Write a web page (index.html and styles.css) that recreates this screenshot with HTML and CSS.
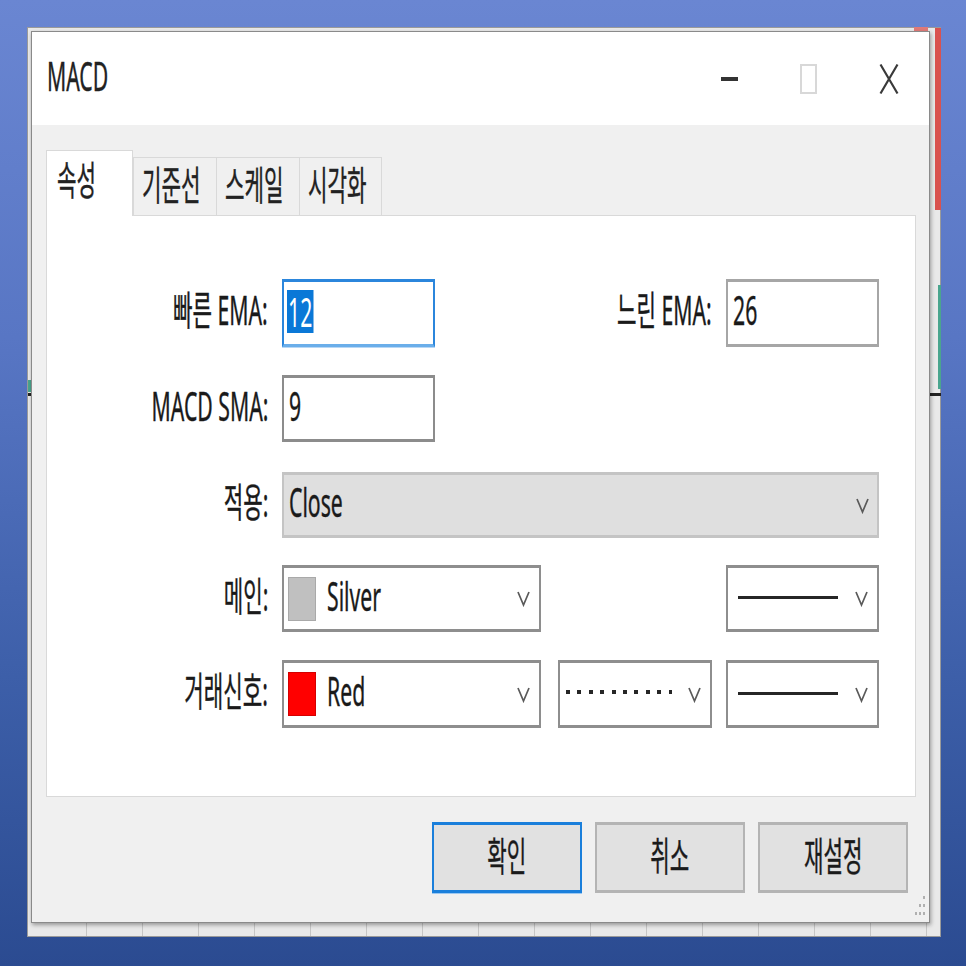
FILE: index.html
```html
<!DOCTYPE html>
<html lang="ko">
<head>
<meta charset="utf-8">
<title>MACD</title>
<link rel="stylesheet" href="styles.css">
</head>
<body>
<div class="frame">
  <div class="chart-red"></div>
  <div class="chart-red-top"></div>
  <div class="chart-green"></div>
  <div class="chart-tick"></div>
  <div class="chart-line chart-line-l"></div>
  <div class="chart-line chart-line-r"></div>
  <div class="chart-ticks"></div>
  <div class="dialog">
    <div class="titlebar">
      <span class="t title">MACD</span>
      <div class="controls">
        <span class="ctl-min"></span>
        <span class="ctl-max"></span>
        <svg class="ctl-close" viewBox="0 0 20 32" width="20" height="32"><path d="M1.5 1.5 L18.5 30.5 M18.5 1.5 L1.5 30.5" fill="none" stroke="#3a3a3a" stroke-width="2.2"/></svg>
      </div>
    </div>
    <div class="body">
      <div class="tabs">
        <div class="tab active"><span class="t">속성</span></div>
        <div class="tab"><span class="t">기준선</span></div>
        <div class="tab"><span class="t">스케일</span></div>
        <div class="tab last"><span class="t">시각화</span></div>
      </div>
      <div class="panel">
        <div class="form">
          <div class="lbl r1"><span class="t">빠른 EMA:</span></div>
          <div class="input focus r1 c3"><span class="t sel">12</span></div>
          <div class="lbl r1 c6"><span class="t">느린 EMA:</span></div>
          <div class="input r1 c8"><span class="t">26</span></div>

          <div class="lbl r2"><span class="t">MACD SMA:</span></div>
          <div class="input dark r2 c3"><span class="t">9</span></div>

          <div class="lbl r3"><span class="t">적용:</span></div>
          <div class="select disabled r3 wide"><span class="t">Close</span>
            <svg class="chev" viewBox="0 0 13 17" width="13" height="17"><polyline points="1,2 6.5,15 12,2" fill="none" stroke="#5a5a5a" stroke-width="1.7"/></svg>
          </div>

          <div class="lbl r4"><span class="t">메인:</span></div>
          <div class="select r4 c34"><span class="swatch silver"></span><span class="t">Silver</span>
            <svg class="chev" viewBox="0 0 13 17" width="13" height="17"><polyline points="1,2 6.5,15 12,2" fill="none" stroke="#5a5a5a" stroke-width="1.7"/></svg>
          </div>
          <div class="select line-sel r4 c8"><span class="solid"></span>
            <svg class="chev" viewBox="0 0 13 17" width="13" height="17"><polyline points="1,2 6.5,15 12,2" fill="none" stroke="#5a5a5a" stroke-width="1.7"/></svg>
          </div>

          <div class="lbl r5"><span class="t">거래신호:</span></div>
          <div class="select r5 c34"><span class="swatch red"></span><span class="t">Red</span>
            <svg class="chev" viewBox="0 0 13 17" width="13" height="17"><polyline points="1,2 6.5,15 12,2" fill="none" stroke="#5a5a5a" stroke-width="1.7"/></svg>
          </div>
          <div class="select dot-sel r5 c6"><span class="dotted"></span>
            <svg class="chev" viewBox="0 0 13 17" width="13" height="17"><polyline points="1,2 6.5,15 12,2" fill="none" stroke="#5a5a5a" stroke-width="1.7"/></svg>
          </div>
          <div class="select line-sel r5 c8"><span class="solid"></span>
            <svg class="chev" viewBox="0 0 13 17" width="13" height="17"><polyline points="1,2 6.5,15 12,2" fill="none" stroke="#5a5a5a" stroke-width="1.7"/></svg>
          </div>
        </div>
      </div>
      <div class="buttons">
        <button class="btn default"><span class="t">확인</span></button>
        <button class="btn"><span class="t">취소</span></button>
        <button class="btn"><span class="t">재설정</span></button>
      </div>
    </div>
    <svg class="grip" viewBox="0 0 12 26" width="12" height="26">
      <rect x="9" y="2" width="2" height="3" fill="#b0b0b0"/>
      <rect x="5" y="10" width="2" height="3" fill="#b0b0b0"/>
      <rect x="9" y="10" width="2" height="3" fill="#b0b0b0"/>
      <rect x="1" y="18" width="2" height="3" fill="#b0b0b0"/>
      <rect x="5" y="18" width="2" height="3" fill="#b0b0b0"/>
      <rect x="9" y="18" width="2" height="3" fill="#b0b0b0"/>
    </svg>
  </div>
</div>
</body>
</html>
```
FILE: styles.css
```css
* { box-sizing: border-box; }

html, body {
  margin: 0;
  height: 100%;
}

body {
  background: linear-gradient(180deg, #6a86d2 0%, #5876c4 35%, #3d5fa9 70%, #2b4b91 100%);
  font-family: "Noto Sans", "Noto Sans CJK KR", sans-serif;
  font-size: 40px;
  color: #111;
  padding: 27px 0 0 27px;
}

/* text is tall and narrow in the reference */
.t {
  display: inline-block;
  line-height: 1;
  white-space: nowrap;
  -webkit-text-stroke: 0.4px currentColor;
  transform: translateY(-3px) scaleX(0.53);
  transform-origin: left center;
}

/* background chart window */
.frame {
  position: relative;
  width: 914px;
  height: 910px;
  border: 1px solid #9a9a9a;
  background: #e9e9e9;
  padding: 3px 10px 13px 3px;
}

.chart-red {
  position: absolute;
  left: 907px;
  top: 0;
  width: 6px;
  height: 182px;
  background: #d9524f;
}

.chart-red-top {
  position: absolute;
  left: 886px;
  top: -1px;
  width: 14px;
  height: 4px;
  background: #e07a78;
}

.chart-green {
  position: absolute;
  left: 910px;
  top: 257px;
  width: 3px;
  height: 104px;
  background: #4aa58e;
}

.chart-tick {
  position: absolute;
  left: 0;
  top: 352px;
  width: 3px;
  height: 12px;
  background: #4aa58e;
}

.chart-line {
  position: absolute;
  top: 365px;
  height: 3px;
  background: #222;
}

.chart-line-l { left: 0; width: 3px; }
.chart-line-r { left: 902px; width: 11px; }

.chart-ticks {
  position: absolute;
  left: 0;
  right: 0;
  bottom: 0;
  height: 13px;
  background: repeating-linear-gradient(90deg, transparent 0 55px, #c6c6c6 55px 56px);
  background-position: 3px 0;
}

/* dialog */
.dialog {
  position: relative;
  height: 100%;
  border: 1px solid #8a8a8a;
  background: #f0f0f0;
  box-shadow: 1px 2px 4px rgba(0, 0, 0, 0.35);
  display: flex;
  flex-direction: column;
}

.titlebar {
  height: 93px;
  flex: none;
  background: #fff;
  display: flex;
  align-items: center;
  padding: 0 30px 0 15px;
}

.title { color: #222; }

.controls {
  margin-left: auto;
  display: flex;
  align-items: center;
}

.ctl-min {
  display: block;
  width: 17px;
  height: 4px;
  background: #333;
  margin-right: 62px;
}

.ctl-max {
  display: block;
  width: 17px;
  height: 30px;
  border: 2px solid #d8d8d8;
  margin-right: 62px;
}

.ctl-close { display: block; }

.body {
  flex: 1;
  padding: 25px 13px 0 14px;
}

/* tabs */
.tabs {
  display: flex;
  align-items: flex-end;
  height: 65px;
}

.tab {
  height: 58px;
  width: 83px;
  border-left: 1px solid #d9d9d9;
  border-top: 1px solid #d9d9d9;
  background: #f0f0f0;
  padding: 2px 0 0 8px;
  color: #222;
}

.tab.last {
  width: 83px;
  border-right: 1px solid #d9d9d9;
}

.tab.active {
  position: relative;
  z-index: 1;
  width: 87px;
  height: 66px;
  margin-bottom: -1px;
  background: #fff;
  border-right: 1px solid #d9d9d9;
  padding: 4px 0 0 10px;
}

.panel {
  height: 582px;
  border: 1px solid #d9d9d9;
  background: #fff;
  padding-top: 63px;
}

/* form grid */
.form {
  display: grid;
  grid-template-columns: 221px 14px 153px 106px 17px 154px 14px 153px;
  grid-template-rows: 68px 28px 67px 30px 66px 27px 67px 28px 68px;
}

.r1 { grid-row: 1; }
.r2 { grid-row: 3; }
.r3 { grid-row: 5; }
.r4 { grid-row: 7; }
.r5 { grid-row: 9; }

.lbl {
  grid-column: 1;
  display: flex;
  align-items: center;
  justify-content: flex-end;
  color: #1a1a1a;
}

.lbl .t { transform-origin: right center; }

.lbl.c6 { grid-column: 6; }
.c3 { grid-column: 3; }
.c34 { grid-column: 3 / 5; }
.c6 { grid-column: 6; }
.c8 { grid-column: 8; }
.wide { grid-column: 3 / 9; }

.input {
  display: flex;
  align-items: center;
  background: #fff;
  border: 2px solid #a6a6a6;
  border-top-width: 3px;
  border-bottom-width: 3px;
  padding-left: 5px;
  color: #1a1a1a;
}

.input.dark {
  border-color: #8c8c8c;
}

.input.focus {
  border-color: #2b86dc;
  border-bottom-color: #6aaeea;
  box-shadow: 0 1px 0 #b7d7f5;
  padding-left: 3px;
}

.sel {
  background: #0a78d7;
  color: #fff;
  line-height: 43px;
  padding: 0 2px;
  -webkit-text-stroke: 0;
  transform: translateY(-2px) scaleX(0.53);
}

.select {
  display: flex;
  align-items: center;
  background: #fff;
  border: 2px solid #8e8e8e;
  border-top-width: 3px;
  border-bottom-width: 3px;
  padding: 0 9px 0 4px;
  color: #1a1a1a;
}

.select.disabled {
  background: #dfdfdf;
  border-color: #c4c4c4;
  padding-left: 5px;
  padding-right: 8px;
}

.chev {
  display: block;
  margin-left: auto;
  flex: none;
}

.swatch {
  display: block;
  flex: none;
  width: 28px;
  height: 44px;
  margin-right: 11px;
}

.swatch.silver {
  background: #c0c0c0;
  border: 1px solid #a9a9a9;
}

.swatch.red {
  background: #ff0000;
  border: 1px solid #d40000;
}

.line-sel { padding-left: 10px; }
.dot-sel { padding-left: 6px; }

.solid {
  display: block;
  width: 100px;
  height: 3px;
  background: #262626;
  margin-top: -2px;
}

.dotted {
  display: block;
  width: 106px;
  height: 4px;
  margin-top: -4px;
  background: repeating-linear-gradient(90deg, #262626 0 4px, transparent 4px 11.4px);
}

/* bottom buttons */
.buttons {
  display: flex;
  justify-content: flex-end;
  gap: 13px;
  margin-top: 25px;
  padding-right: 8px;
}

.btn {
  width: 150px;
  height: 71px;
  background: #e1e1e1;
  border: 2px solid #b4b4b4;
  border-top-width: 3px;
  border-bottom-width: 3px;
  font: inherit;
  color: #1a1a1a;
  padding: 0;
  display: flex;
  align-items: center;
  justify-content: center;
}

.btn .t {
  transform-origin: center center;
  transform: translateY(-2px) scaleX(0.53);
}

.btn.default {
  border-color: #1a7fdb;
  box-shadow: 0 1px 0 #9cc8f1;
}

.grip {
  position: absolute;
  right: 3px;
  bottom: 2px;
}
```
